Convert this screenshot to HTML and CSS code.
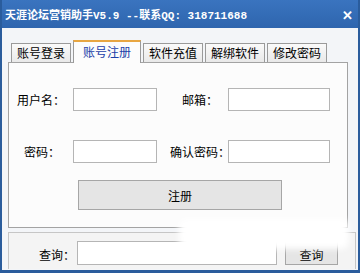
FILE: index.html
```html
<!DOCTYPE html>
<html lang="zh-CN">
<head>
    <meta charset="UTF-8">
    <meta name="viewport" content="width=device-width, initial-scale=1.0">
    <title>天涯论坛营销助手</title>
    <link rel="stylesheet" href="styles.css">
</head>
<body>
    <div class="window">
        <div class="titlebar">
            <span class="title">天涯论坛营销助手V5.9 --联系QQ: 318711688</span>
            <span class="close">✕</span>
        </div>
        <div class="client">
            <div class="tabs">
                <div class="tab">账号登录</div>
                <div class="tab active">账号注册</div>
                <div class="tab">软件充值</div>
                <div class="tab">解绑软件</div>
                <div class="tab">修改密码</div>
            </div>
            <div class="panel">
                <div class="form">
                    <label class="lbl lbl-user" for="user">用户名：</label>
                    <input class="box" type="text" id="user">
                    <label class="lbl lbl-mail" for="mail">邮箱：</label>
                    <input class="box box-wide" type="text" id="mail">

                    <label class="lbl lbl-pass" for="pass">密码：</label>
                    <input class="box" type="password" id="pass">
                    <label class="lbl lbl-confirm" for="confirm">确认密码：</label>
                    <input class="box box-wide" type="password" id="confirm">
                </div>
                <button class="btn btn-reg" type="button">注册</button>
            </div>
            <div class="query">
                <label class="lbl" for="q">查询：</label>
                <input class="box box-query" type="text" id="q">
                <button class="btn btn-query" type="button">查询</button>
                <div class="smudge"></div>
            </div>
        </div>
    </div>
</body>
</html>
```

FILE: styles.css
```css
body {
    margin: 0;
    font-family: "Noto Sans CJK SC", "Liberation Sans", sans-serif;
    font-size: 12px;
    color: #000;
    background: #fff;
}

.window {
    width: 360px;
    height: 273px;
    box-sizing: border-box;
    border: 2px solid #2a5c9c;
    border-top: none;
    border-bottom-width: 3px;
    background: #f3f5f8;
    display: flex;
    flex-direction: column;
    overflow: hidden;
}

.titlebar {
    height: 28px;
    margin: 0 -2px;
    padding: 0 7px 0 5px;
    background: linear-gradient(#3a74bf, #2e65ae);
    color: #fff;
    display: flex;
    align-items: center;
    justify-content: space-between;
}

.title {
    font-family: "Liberation Mono", "Noto Sans CJK SC", monospace;
    font-size: 11px;
    font-weight: bold;
    white-space: nowrap;
}

.close {
    font-size: 13px;
    font-weight: bold;
}

.client {
    flex: 1;
    padding: 12px 8px 0 6px;
    display: flex;
    flex-direction: column;
}

.tabs {
    display: flex;
    align-items: flex-end;
    height: 22px;
    padding-left: 3px;
    gap: 2px;
    position: relative;
    z-index: 1;
}

.tab {
    height: 19px;
    box-sizing: border-box;
    padding: 0 5px;
    border: 1px solid #9a9a9a;
    border-bottom: none;
    background: linear-gradient(#fafafa, #e9e9e9);
    line-height: 18px;
}

.tab.active {
    height: 23px;
    margin-bottom: -1px;
    padding: 0 9px;
    background: #fcfcfc;
    border-top: 2px solid #e8a641;
    color: #1b3fa8;
    line-height: 20px;
}

.panel {
    width: 340px;
    height: 166px;
    box-sizing: border-box;
    border: 1px solid #a3a3a3;
    background: #fcfcfc;
    padding: 25px 0 0 8px;
}

.form {
    display: grid;
    grid-template-columns: 56px 84px 71px 102px;
    grid-template-rows: 23px 23px;
    row-gap: 29px;
    align-items: center;
}

.lbl {
    white-space: nowrap;
}

.lbl-pass {
    padding-left: 7px;
}

.lbl-mail {
    padding-left: 25px;
}

.lbl-confirm {
    padding-left: 13px;
}

.box {
    height: 23px;
    box-sizing: border-box;
    border: 1px solid #b5b5b5;
    background: #fff;
    padding: 0 3px;
    font: inherit;
}

.box-wide {
    width: 102px;
}

.btn {
    font: inherit;
    color: #000;
    border: 1px solid #a6a6a6;
    background: #e5e5e5;
    padding: 0;
}

.btn-reg {
    display: block;
    width: 204px;
    height: 30px;
    margin: 17px 0 0 61px;
}

.query {
    position: relative;
    margin-top: 4px;
    margin-right: -6px;
    height: 36px;
    border: 1px solid #c6c6c6;
    border-bottom: none;
    background: #f4f4f4;
    display: flex;
    align-items: flex-end;
    padding-left: 30px;
}

.query .lbl {
    margin-bottom: 6px;
    width: 38px;
}

.box-query {
    width: 200px;
    height: 24px;
    margin-bottom: 4px;
}

.btn-query {
    width: 53px;
    height: 28px;
    margin: 0 0 4px 8px;
    padding-top: 6px;
}

.smudge {
    position: absolute;
    left: 170px;
    top: -14px;
    width: 170px;
    height: 30px;
    background: #fff;
    border-radius: 8px;
    filter: blur(3px);
}
```
